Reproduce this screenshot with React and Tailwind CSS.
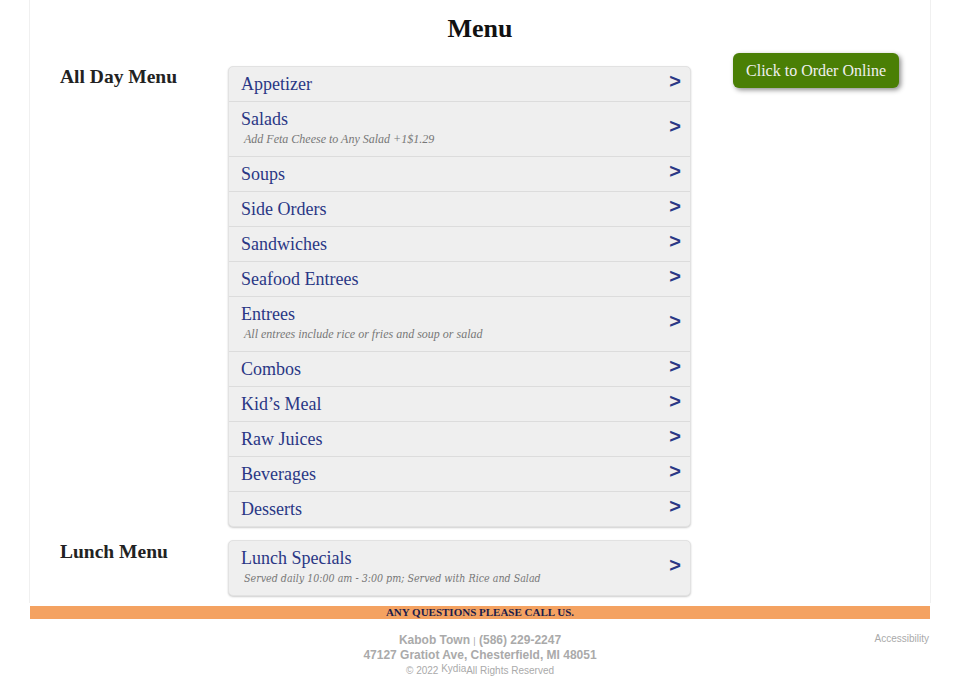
const allDay = [
  { name: "Appetizer" },
  { name: "Salads", note: "Add Feta Cheese to Any Salad +1$1.29" },
  { name: "Soups" },
  { name: "Side Orders" },
  { name: "Sandwiches" },
  { name: "Seafood Entrees" },
  { name: "Entrees", note: "All entrees include rice or fries and soup or salad" },
  { name: "Combos" },
  { name: "Kid’s Meal" },
  { name: "Raw Juices" },
  { name: "Beverages" },
  { name: "Desserts" },
];

const lunch = [
  {
    name: "Lunch Specials",
    note: "Served daily 10:00 am - 3:00 pm; Served with Rice and Salad",
    alt: true,
  },
];

function MenuRow({ item, last }) {
  return (
    <div
      className={`flex items-center justify-between pl-[12px] pr-[9px] py-[7px] ${
        last ? "" : "border-b border-[#dcdcdc]"
      }`}
    >
      <div>
        <p className="text-[18px] leading-[20px] text-[#2a3785]">{item.name}</p>
        {item.note ? (
          <p
            className={`pl-[3px] italic leading-[20px] text-[#777] ${
              item.alt
                ? "text-[10.6px] font-['DejaVu_Serif_Condensed','DejaVu_Serif',serif] font-stretch-condensed"
                : "text-[12px]"
            }`}
          >
            {item.note}
          </p>
        ) : null}
      </div>
      <span className="relative -top-[3px] font-['Liberation_Sans',sans-serif] text-[20px] font-bold leading-[20px] text-[#2a3785]">
        &gt;
      </span>
    </div>
  );
}

function MenuBox({ items }) {
  return (
    <div className="rounded-[5px] border border-[#e2e2e2] bg-[#efefef] shadow-[0_1px_2px_rgba(0,0,0,0.2)]">
      {items.map((item, i) => (
        <MenuRow key={item.name} item={item} last={i === items.length - 1} />
      ))}
    </div>
  );
}

export default function App() {
  return (
    <div className="w-[960px] bg-white font-['Liberation_Serif',serif] text-[#222]">
      <div className="mx-[29px] border-x border-[#f0f0f0] pb-[7px]">
        <h1 className="pt-[12px] text-center text-[26px] font-bold leading-[34px] text-[#111]">
          Menu
        </h1>

        <div className="mt-[7px] flex">
          <div className="w-[198px] pl-[30px] pt-[13px]">
            <h2 className="text-[19.5px] font-bold leading-[22px]">All Day Menu</h2>
          </div>
          <div className="mt-[13px] w-[463px]">
            <MenuBox items={allDay} />
          </div>
          <div className="ml-[42px]">
            <button className="h-[35px] w-[166px] rounded-[6px] bg-[#4a7f05] text-[16px] text-[#f0f0f0] shadow-[2px_2px_5px_rgba(0,0,0,0.45)]">
              Click to Order Online
            </button>
          </div>
        </div>

        <div className="mt-[13px] flex">
          <div className="w-[198px] pl-[30px] pt-[1px]">
            <h2 className="text-[19.5px] font-bold leading-[22px]">Lunch Menu</h2>
          </div>
          <div className="w-[463px]">
            <MenuBox items={lunch} />
          </div>
        </div>
      </div>

      <div className="mx-[30px] mt-[3px] bg-[#f4a261] text-center text-[11px] font-bold leading-[13px] text-[#1c1c4a]">
        ANY QUESTIONS PLEASE CALL US.
      </div>

      <div className="grid grid-cols-[1fr_auto_1fr] pt-[14px] pb-[20px] font-['Liberation_Sans',sans-serif] text-[#aaa]">
        <div />
        <div className="text-center">
          <p className="text-[12px] font-bold leading-[14px]">
            Kabob Town <span className="text-[9px] font-normal">|</span> (586) 229-2247
          </p>
          <p className="text-[12px] font-bold leading-[14px]">
            47127 Gratiot Ave, Chesterfield, MI 48051
          </p>
          <p className="mt-[2px] text-[10px] leading-[14px]">
            © 2022 <span className="relative -top-[2px] text-[10px]">Kydia</span>All Rights Reserved
          </p>
        </div>
        <div className="pr-[31px] text-right">
          <p className="text-[10px] leading-[12px]">Accessibility</p>
        </div>
      </div>
    </div>
  );
}
